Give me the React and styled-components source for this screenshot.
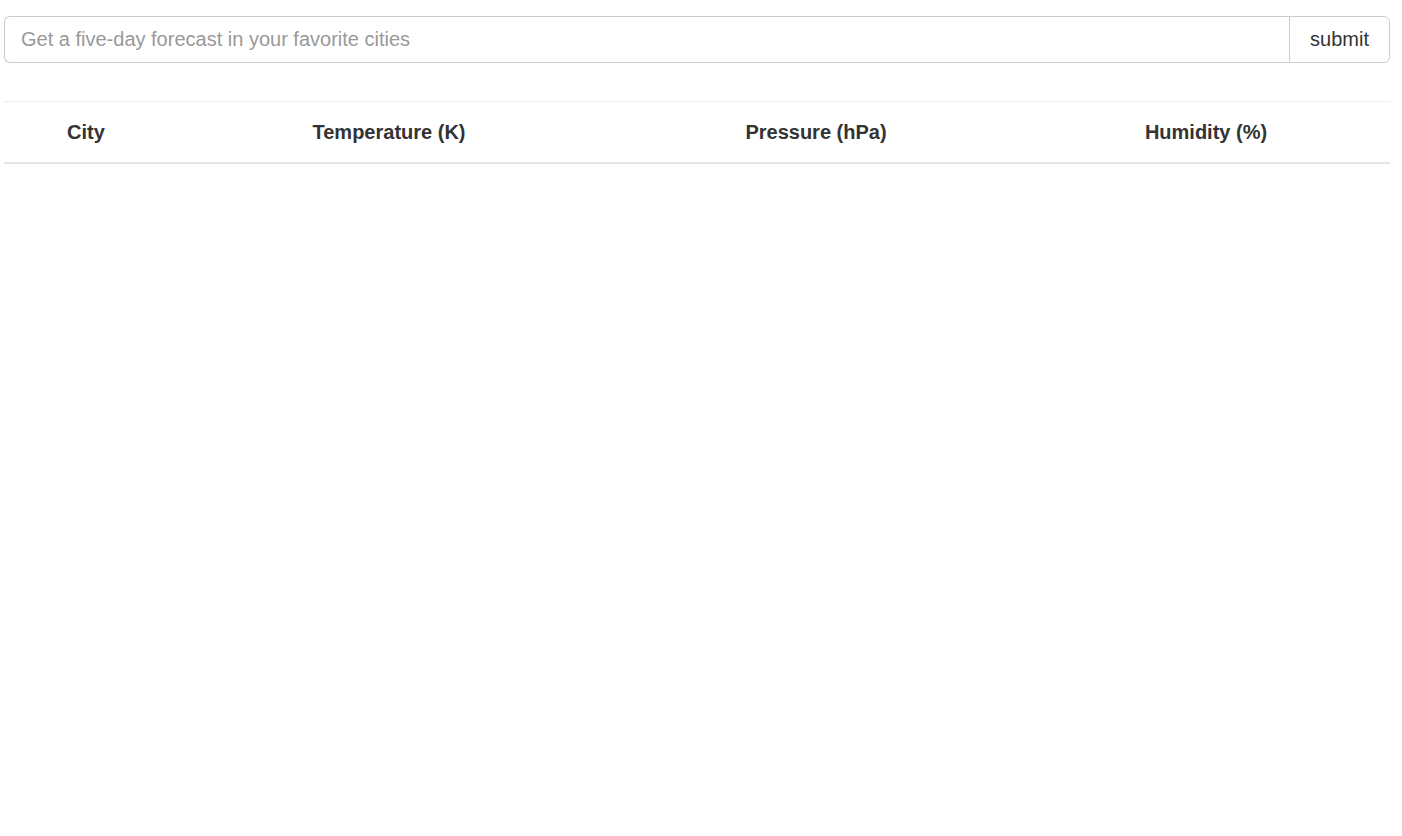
import React, { useState } from "react";
import styled, { createGlobalStyle } from "styled-components";

const GlobalStyle = createGlobalStyle`
  body {
    margin: 0;
    background: #fff;
    font-family: "Liberation Sans", Arial, sans-serif;
    color: #333;
  }
`;

function App() {
  const [term, setTerm] = useState("");
  const columns = [
    { label: "City", width: 164 },
    { label: "Temperature (K)", width: 442 },
    { label: "Pressure (hPa)", width: 412 },
    { label: "Humidity (%)", width: 368 },
  ];

  return (
    <>
      <GlobalStyle />
      <Page>
        <SearchForm onSubmit={(e) => e.preventDefault()}>
          <SearchInput
            placeholder="Get a five-day forecast in your favorite cities"
            value={term}
            onChange={(e) => setTerm(e.target.value)}
          />
          <SubmitButton type="submit">submit</SubmitButton>
        </SearchForm>
        <Table>
          <colgroup>
            {columns.map((col) => (
              <col key={col.label} style={{ width: col.width }} />
            ))}
          </colgroup>
          <thead>
            <tr>
              {columns.map((col) => (
                <Th key={col.label}>{col.label}</Th>
              ))}
            </tr>
          </thead>
          <tbody></tbody>
        </Table>
      </Page>
    </>
  );
}

const Page = styled.div`
  padding: 16px 12px 0 4px;
`;

const SearchForm = styled.form`
  display: flex;
  height: 47px;
  margin: 0;
`;

const SearchInput = styled.input`
  flex: 1;
  box-sizing: border-box;
  height: 47px;
  padding: 10px 16px;
  font-family: "Liberation Sans", Arial, sans-serif;
  font-size: 20px;
  color: #555;
  border: 1px solid #ccc;
  border-right: none;
  border-radius: 6px 0 0 6px;
  outline: none;
  &::placeholder {
    color: #999;
  }
`;

const SubmitButton = styled.button`
  box-sizing: border-box;
  width: 101px;
  height: 47px;
  padding: 10px 16px;
  font-family: "Liberation Sans", Arial, sans-serif;
  font-size: 20px;
  color: #333;
  background: #fff;
  border: 1px solid #ccc;
  border-radius: 0 6px 6px 0;
  cursor: pointer;
`;

const Table = styled.table`
  width: 1386px;
  margin-top: 38px;
  border-collapse: collapse;
  table-layout: fixed;
  border-top: 1px solid #eee;
`;

const Th = styled.th`
  height: 61px;
  padding: 2px 8px 0;
  box-sizing: border-box;
  text-align: center;
  vertical-align: middle;
  font-size: 20px;
  font-weight: bold;
  color: #333;
  border-bottom: 2px solid #e6e6e6;
`;

export default App;
